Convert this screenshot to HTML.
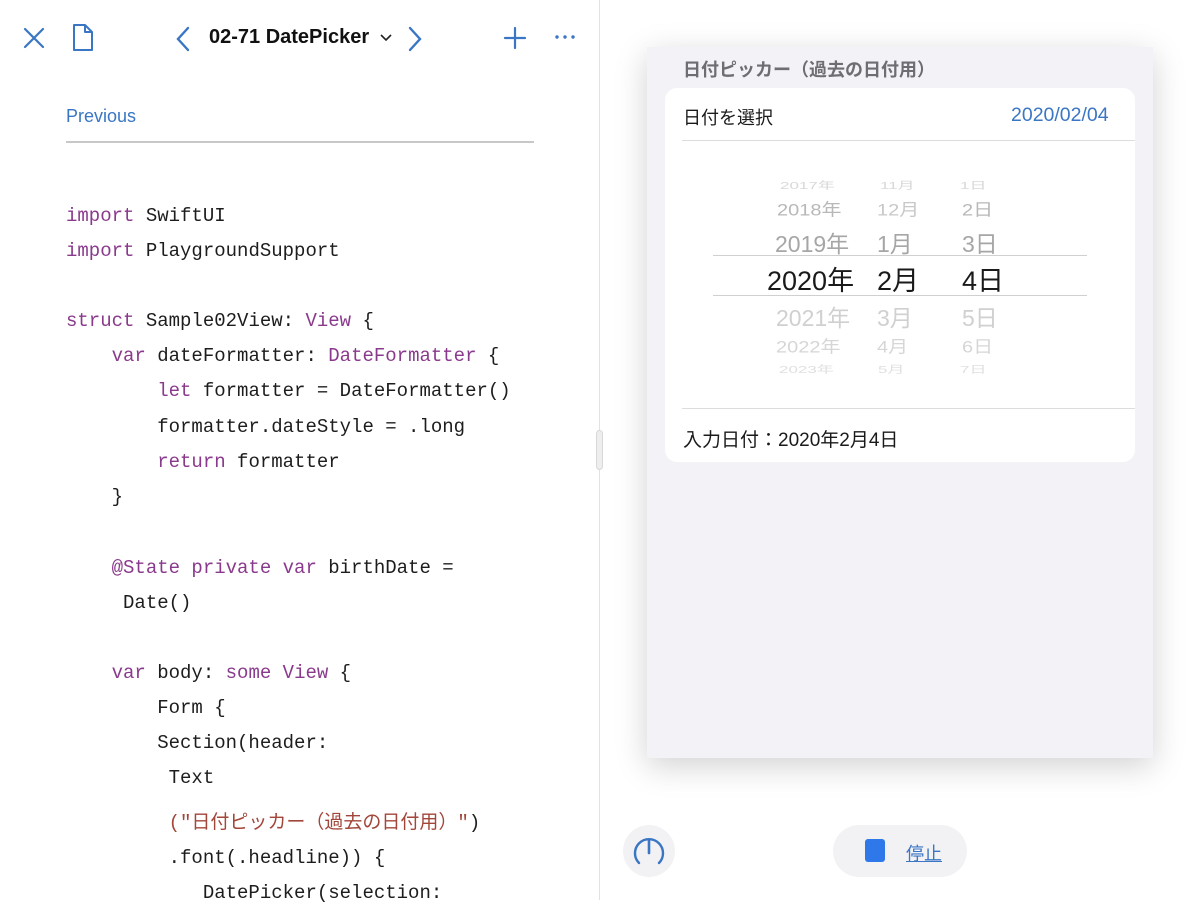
<!DOCTYPE html>
<html><head><meta charset="utf-8"><style>
*{margin:0;padding:0;box-sizing:border-box}
body{width:1200px;height:900px;background:#fff;position:relative;overflow:hidden;font-family:"Liberation Sans","Noto Sans CJK JP",sans-serif}
.abs{position:absolute}
.code{position:absolute;font-family:"Liberation Mono","Noto Sans CJK JP",monospace;font-size:19px;color:#1d1d1d;white-space:pre;line-height:22px}
.k{color:#8a3a8c}.s{color:#a3463a}
.pk{position:absolute;font-size:22px;color:#c8c8c8;white-space:nowrap}
</style></head><body>
<svg class="abs" style="left:22px;top:26px" width="24" height="24" viewBox="0 0 24 24"><path d="M3 3L21 21M21 3L3 21" stroke="#3a76c4" stroke-width="2.2" fill="none" stroke-linecap="round"/></svg>
<svg class="abs" style="left:70px;top:23px" width="26" height="30" viewBox="0 0 26 30"><path d="M4 2H15L22 9V27H4Z M15 2V9H22" stroke="#3a76c4" stroke-width="2" fill="none" stroke-linejoin="round"/></svg>
<svg class="abs" style="left:174px;top:26px" width="18" height="26" viewBox="0 0 18 26"><path d="M14 2L4 13L14 24" stroke="#3a76c4" stroke-width="2.4" fill="none" stroke-linecap="round"/></svg>
<div class="abs" style="left:209px;top:26px;font-size:20px;font-weight:bold;color:#111">02-71 DatePicker</div>
<svg class="abs" style="left:379px;top:33px" width="14" height="10" viewBox="0 0 14 10"><path d="M2 2L7 7L12 2" stroke="#222" stroke-width="1.6" fill="none"/></svg>
<svg class="abs" style="left:406px;top:26px" width="18" height="26" viewBox="0 0 18 26"><path d="M4 2L14 13L4 24" stroke="#3a76c4" stroke-width="2.4" fill="none" stroke-linecap="round"/></svg>
<svg class="abs" style="left:503px;top:26px" width="24" height="24" viewBox="0 0 24 24"><path d="M12 2V22M2 12H22" stroke="#3a76c4" stroke-width="2.2" fill="none" stroke-linecap="round"/></svg>
<svg class="abs" style="left:554px;top:33px" width="22" height="8" viewBox="0 0 22 8"><circle cx="3" cy="4" r="1.7" fill="#3a76c4"/><circle cx="11" cy="4" r="1.7" fill="#3a76c4"/><circle cx="19" cy="4" r="1.7" fill="#3a76c4"/></svg>
<div class="abs" style="left:66px;top:106px;font-size:18px;color:#3a76c4">Previous</div>
<div class="abs" style="left:66px;top:141px;width:468px;height:2px;background:#c8c8c8"></div>
<div class="code" style="left:66px;top:205px"><span class="k">import</span> SwiftUI</div>
<div class="code" style="left:66px;top:240px"><span class="k">import</span> PlaygroundSupport</div>
<div class="code" style="left:66px;top:310px"><span class="k">struct</span> Sample02View: <span class="k">View</span> {</div>
<div class="code" style="left:66px;top:345px">    <span class="k">var</span> dateFormatter: <span class="k">DateFormatter</span> {</div>
<div class="code" style="left:66px;top:380px">        <span class="k">let</span> formatter = DateFormatter()</div>
<div class="code" style="left:66px;top:416px">        formatter.dateStyle = .long</div>
<div class="code" style="left:66px;top:451px">        <span class="k">return</span> formatter</div>
<div class="code" style="left:66px;top:486px">    }</div>
<div class="code" style="left:66px;top:557px">    <span class="k">@State private var</span> birthDate =</div>
<div class="code" style="left:66px;top:592px">     Date()</div>
<div class="code" style="left:66px;top:662px">    <span class="k">var</span> body: <span class="k">some View</span> {</div>
<div class="code" style="left:66px;top:697px">        Form {</div>
<div class="code" style="left:66px;top:732px">        Section(header:</div>
<div class="code" style="left:66px;top:767px">         Text</div>
<div class="code" style="left:66px;top:812px">         <span class="s">("日付ピッカー（過去の日付用）"</span>)</div>
<div class="code" style="left:66px;top:847px">         .font(.headline)) {</div>
<div class="code" style="left:66px;top:882px">            DatePicker(selection:</div>
<div class="abs" style="left:599px;top:0;width:1px;height:900px;background:#e2e2e2"></div>
<div class="abs" style="left:596px;top:430px;width:7px;height:40px;border-radius:4px;background:#eee;border:1px solid #d8d8d8"></div>
<div class="abs" style="left:647px;top:47px;width:506px;height:711px;background:#f2f2f7;box-shadow:0 8px 30px rgba(0,0,0,0.18)"></div>
<div class="abs" style="left:683px;top:56px;font-size:18px;font-weight:bold;color:#6d6d72">日付ピッカー（過去の日付用）</div>
<div class="abs" style="left:665px;top:88px;width:470px;height:374px;background:#fff;border-radius:12px"></div>
<div class="abs" style="left:683px;top:104px;font-size:18px;color:#1a1a1a">日付を選択</div>
<div class="abs" style="left:1011px;top:104px;font-size:19.5px;color:#3a76c4">2020/02/04</div>
<div class="abs" style="left:682px;top:140px;width:453px;height:1px;background:#ddd"></div>
<div class="abs" style="left:682px;top:408px;width:453px;height:1px;background:#ddd"></div>
<div class="abs" style="left:713px;top:255px;width:374px;height:1px;background:#d0d0d0"></div>
<div class="abs" style="left:713px;top:295px;width:374px;height:1px;background:#d0d0d0"></div>
<div class="pk" style="left:780px;top:172px;font-size:17px;color:#d8d8d8;transform:scaleY(.6)">2017年</div>
<div class="pk" style="left:880px;top:172px;font-size:17px;color:#d8d8d8;transform:scaleY(.6)">11月</div>
<div class="pk" style="left:960px;top:172px;font-size:17px;color:#d8d8d8;transform:scaleY(.6)">1日</div>
<div class="pk" style="left:777px;top:194px;font-size:20px;color:#b8b8b8;transform:scaleY(.85)">2018年</div>
<div class="pk" style="left:877px;top:194px;font-size:20px;color:#c8c8c8;transform:scaleY(.85)">12月</div>
<div class="pk" style="left:962px;top:194px;font-size:20px;color:#b8b8b8;transform:scaleY(.85)">2日</div>
<div class="pk" style="left:775px;top:225px;font-size:23px;color:#a6a6a6">2019年</div>
<div class="pk" style="left:877px;top:225px;font-size:23px;color:#a6a6a6">1月</div>
<div class="pk" style="left:962px;top:225px;font-size:23px;color:#a6a6a6">3日</div>
<div class="pk" style="left:767px;top:259px;font-size:27px;color:#1a1a1a">2020年</div>
<div class="pk" style="left:877px;top:259px;font-size:27px;color:#1a1a1a">2月</div>
<div class="pk" style="left:962px;top:259px;font-size:27px;color:#1a1a1a">4日</div>
<div class="pk" style="left:776px;top:299px;font-size:23px;color:#d0d0d0">2021年</div>
<div class="pk" style="left:877px;top:299px;font-size:23px;color:#d0d0d0">3月</div>
<div class="pk" style="left:962px;top:299px;font-size:23px;color:#d0d0d0">5日</div>
<div class="pk" style="left:776px;top:331px;font-size:20px;color:#d6d6d6;transform:scaleY(.85)">2022年</div>
<div class="pk" style="left:877px;top:331px;font-size:20px;color:#d6d6d6;transform:scaleY(.85)">4月</div>
<div class="pk" style="left:962px;top:331px;font-size:20px;color:#d6d6d6;transform:scaleY(.85)">6日</div>
<div class="pk" style="left:779px;top:356px;font-size:17px;color:#e0e0e0;transform:scaleY(.6)">2023年</div>
<div class="pk" style="left:878px;top:356px;font-size:17px;color:#e0e0e0;transform:scaleY(.6)">5月</div>
<div class="pk" style="left:960px;top:356px;font-size:17px;color:#e0e0e0;transform:scaleY(.6)">7日</div>
<div class="abs" style="left:683px;top:425px;font-size:19px;color:#1a1a1a">入力日付：2020年2月4日</div>
<div class="abs" style="left:623px;top:825px;width:52px;height:52px;border-radius:50%;background:#f2f2f4"></div>
<svg class="abs" style="left:630px;top:833px" width="38" height="36" viewBox="0 0 38 36"><path d="M9 30A14 14 0 1 1 29 30" stroke="#3a76c4" stroke-width="2.4" fill="none" stroke-linecap="round"/><path d="M19 7V20" stroke="#3a76c4" stroke-width="2.6" stroke-linecap="round"/></svg>
<div class="abs" style="left:833px;top:825px;width:134px;height:52px;border-radius:26px;background:#f2f2f4"></div>
<div class="abs" style="left:865px;top:839px;width:20px;height:23px;border-radius:3px;background:#2f78ea"></div>
<div class="abs" style="left:906px;top:840px;font-size:18px;color:#3a76c4;text-decoration:underline">停止</div>
</body></html>
